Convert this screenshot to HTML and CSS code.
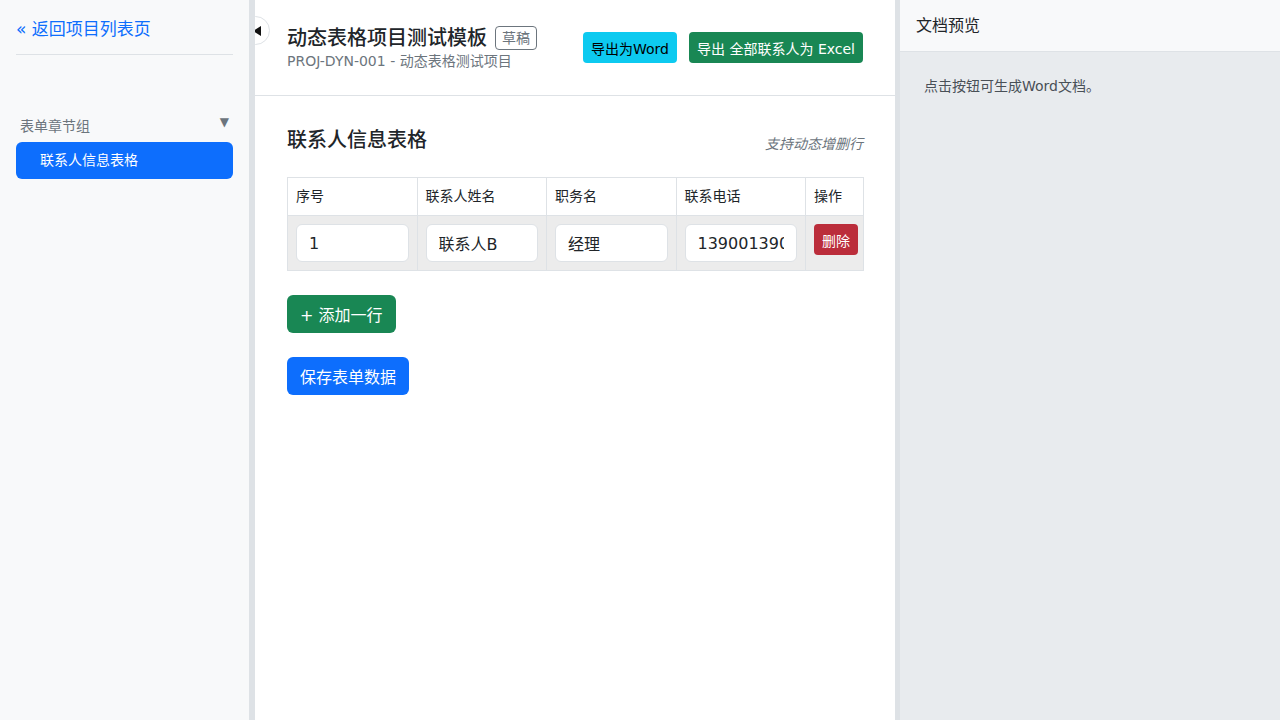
FILE: index.html
```html
<!DOCTYPE html>
<html lang="zh-CN">
<head>
<meta charset="utf-8">
<title>动态表格项目测试模板</title>
<link rel="stylesheet" href="styles.css">
</head>
<body>
<div class="app">
  <aside class="sidebar">
    <a class="back-link" href="#">« 返回项目列表页</a>
    <hr class="side-rule">
    <div class="nav-group">
      <div class="group-label"><span>表单章节组</span><span class="caret">▼</span></div>
      <a class="nav-item active" href="#">联系人信息表格</a>
    </div>
  </aside>
  <div class="gutter"></div>
  <main class="main">
    <button class="collapse-btn" type="button" aria-label="收起侧栏"><svg class="tri" width="8" height="10" viewBox="0 0 8 10"><path d="M0 5 L8 0 L8 10 Z" fill="#111"/></svg></button>
    <header class="main-header">
      <div class="title-block">
        <div class="title-row">
          <h1 class="title">动态表格项目测试模板</h1>
          <span class="badge">草稿</span>
        </div>
        <div class="subtitle">PROJ-DYN-001 - 动态表格测试项目</div>
      </div>
      <div class="actions">
        <button class="btn btn-info btn-sm" type="button">导出为Word</button>
        <button class="btn btn-success btn-sm" type="button">导出 全部联系人为 Excel</button>
      </div>
    </header>
    <section class="content">
      <div class="section-head">
        <h2 class="section-title">联系人信息表格</h2>
        <span class="hint">支持动态增删行</span>
      </div>
      <table class="grid">
        <colgroup>
          <col class="c1"><col class="c2"><col class="c3"><col class="c4"><col class="c5">
        </colgroup>
        <thead>
          <tr><th>序号</th><th>联系人姓名</th><th>职务名</th><th>联系电话</th><th>操作</th></tr>
        </thead>
        <tbody>
          <tr>
            <td><input class="field" value="1"></td>
            <td><input class="field" value="联系人B"></td>
            <td><input class="field" value="经理"></td>
            <td><input class="field" value="13900139000"></td>
            <td><button class="btn btn-danger btn-sm" type="button">删除</button></td>
          </tr>
        </tbody>
      </table>
      <div class="stack">
        <button class="btn btn-success" type="button">+ 添加一行</button>
        <button class="btn btn-primary" type="button">保存表单数据</button>
      </div>
    </section>
  </main>
  <div class="gutter"></div>
  <aside class="preview">
    <div class="preview-head">文档预览</div>
    <div class="preview-body">点击按钮可生成Word文档。</div>
  </aside>
</div>
</body>
</html>
```
FILE: styles.css
```css
* { box-sizing: border-box; }
html, body { margin: 0; height: 100%; }
body {
  font-family: "DejaVu Sans", "Noto Sans CJK SC", sans-serif;
  color: #212529;
  font-size: 16px;
  background: #fff;
}
.app { display: flex; height: 720px; }

.sidebar {
  width: 249px;
  flex: none;
  background: #f8f9fa;
  padding: 16px 16px;
}
.back-link {
  display: block;
  color: #0d6efd;
  text-decoration: none;
  font-size: 17px;
  line-height: 26px;
}
.side-rule {
  border: 0;
  border-top: 1px solid #dee2e6;
  margin: 12px 0 0;
}
.nav-group { margin-top: 60px; }
.group-label {
  display: flex;
  justify-content: space-between;
  align-items: center;
  color: #6c757d;
  font-size: 14px;
  padding: 0 4px;
  height: 20px;
  margin-bottom: 7px;
}
.caret { font-size: 12px; position: relative; top: -3px; }
.nav-item {
  display: block;
  background: #0d6efd;
  color: #fff;
  text-decoration: none;
  font-size: 14px;
  border-radius: 6px;
  height: 37px;
  line-height: 37px;
  padding-left: 24px;
}

.gutter { width: 6px; flex: none; background: #dee2e6; }
.gutter:last-of-type { width: 5px; }

.main {
  width: 640px;
  flex: none;
  position: relative;
  overflow: hidden;
  background: #fff;
}
.collapse-btn {
  position: absolute;
  left: -14px;
  top: 16px;
  width: 29px;
  height: 29px;
  border-radius: 50%;
  border: 1px solid #dee2e6;
  background: #fff;
  padding: 0 8px 0 0;
  display: flex;
  align-items: center;
  justify-content: flex-end;
}
.tri { display: block; }

.main-header {
  display: flex;
  justify-content: space-between;
  align-items: center;
  padding: 24px 32px 24px;
  height: 96px;
  border-bottom: 1px solid #dee2e6;
}
.title-row { display: flex; align-items: center; gap: 8px; }
.title {
  margin: 0;
  font-size: 20px;
  font-weight: 500;
  line-height: 26px;
}
.badge {
  border: 1px solid #6c757d;
  color: #6c757d;
  border-radius: 4px;
  font-size: 14px;
  padding: 1px 6px;
  line-height: 20px;
}
.subtitle {
  color: #6c757d;
  font-size: 14px;
  line-height: 20px;
}
.actions { display: flex; gap: 12px; align-self: flex-start; margin-top: 8px; }

.btn {
  border: 0;
  font-family: inherit;
  cursor: pointer;
  color: #fff;
  font-size: 16px;
  border-radius: 6px;
  height: 38px;
  padding: 0 13px;
  white-space: nowrap;
}
.btn-sm { font-size: 14px; height: 31px; padding: 0 8px; border-radius: 4px; }
.btn-info { background: #0dcaf0; color: #000; }
.btn-success { background: #198754; }
.btn-primary { background: #0d6efd; }
.btn-danger { background: #bb2d3b; }

.content { padding: 30px 32px; }
.section-head {
  display: flex;
  justify-content: space-between;
  align-items: flex-end;
  margin-bottom: 23px;
}
.section-title { margin: 0; font-size: 20px; font-weight: 500; line-height: 28px; }
.hint { color: #6c757d; font-style: italic; font-size: 14px; line-height: 20px; }

.grid {
  width: 100%;
  border-collapse: collapse;
  table-layout: fixed;
  font-size: 14px;
}
.c1, .c2, .c3, .c4 { width: 129.5px; }
.c5 { width: 58px; }
.grid th, .grid td {
  border: 1px solid #dee2e6;
  padding: 8px;
  text-align: left;
  vertical-align: top;
}
.grid th { font-weight: 400; height: 38px; line-height: 20px; }
.grid tbody td { background: #ececec; height: 55px; }
.field {
  width: 100%;
  height: 38px;
  border: 1px solid #dee2e6;
  border-radius: 6px;
  font-family: inherit;
  font-size: 16px;
  color: #212529;
  padding: 6px 12px;
  background: #fff;
}

.stack {
  display: flex;
  flex-direction: column;
  align-items: flex-start;
  gap: 24px;
  margin-top: 24px;
}

.preview { flex: 1; background: #e8ebee; }
.preview-head {
  background: #f8f9fa;
  height: 52px;
  border-bottom: 1px solid #dee2e6;
  padding: 0 16px;
  line-height: 52px;
  font-size: 16px;
}
.preview-body {
  padding: 24px 24px;
  font-size: 14px;
  color: #495057;
  line-height: 20px;
}
```
